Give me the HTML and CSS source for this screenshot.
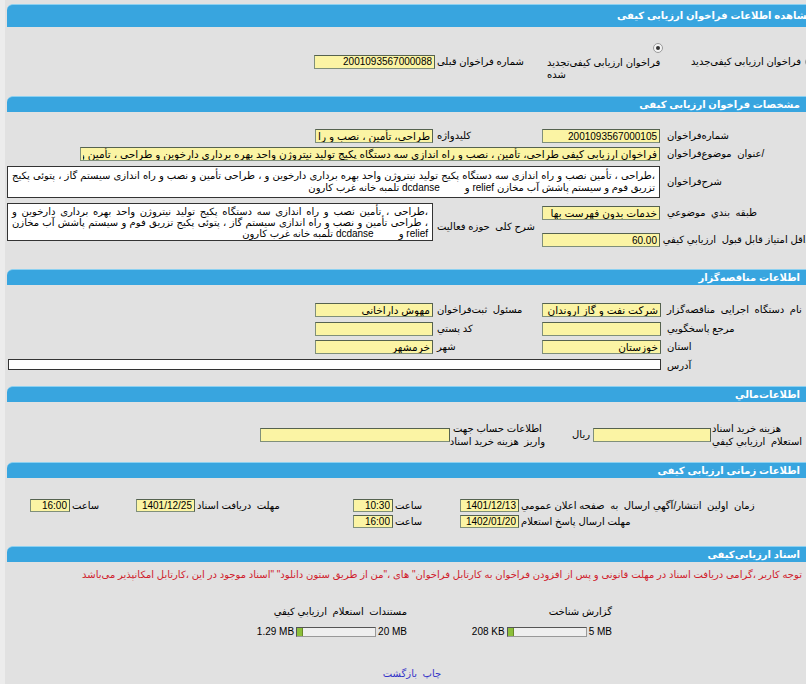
FILE: index.html
```html
<!DOCTYPE html>
<html lang="fa">
<head>
  <meta charset="UTF-8">
  <title>مشاهده اطلاعات فراخوان ارزیابی کیفی</title>
  <link rel="stylesheet" href="styles.css">
</head>
<body>
<div class="page">

  <!-- عنوان صفحه -->
  <div class="bar bar-title">مشاهده اطلاعات فراخوان ارزیابی کیفی</div>
  <div class="sec sec-type">
    <div class="opt opt-new"><span class="radio"></span><span>فراخوان  ارزیابی  کیفی‌جدید</span></div>
    <div class="opt opt-renew"><span class="radio checked"></span><span class="opt-text">فراخوان  ارزیابی  کیفی‌تجدید شده</span></div>
    <div class="lbl">شماره فراخوان قبلی</div>
    <div class="fld"><input class="inp w121" value="2001093567000088" readonly></div>
  </div>

  <!-- مشخصات -->
  <div class="bar">مشخصات فراخوان ارزیابی کیفی</div>
  <div class="sec sec-spec">
    <div class="lbl wide">شماره‌فراخوان</div>
    <div class="fld"><input class="inp w118" value="2001093567000105" readonly></div>
    <div class="lbl">کلیدواژه</div>
    <div class="fld"><input class="inp fa w118 mr2" value="طراحی، تأمین ، نصب و راه اندازی سه دستگاه پکیج" readonly></div>

    <div class="lbl wide">/عنوان&nbsp; موضوع‌فراخوان</div>
    <div class="fld span3"><input class="inp fa w580" value="فراخوان ارزیابی کیفی طراحی، تأمین ، نصب و راه اندازی سه دستگاه پکیج تولید نیتروژن واحد بهره برداری دارخوین و طراحی ، تأمین و نصب و راه اندازی سیستم گاز" readonly></div>

    <div class="lbl wide memo-lbl">شرح‌فراخوان</div>
    <div class="fld span3">
      <div class="memo memo-wide">
        <div class="jl">،طراحی ، تأمین  نصب و راه اندازی سه دستگاه پکیج تولید نیتروژن واحد بهره برداری دارخوین و ، طراحی تأمین و نصب و راه اندازی سیستم گاز ، پتوئی پکیج</div>
        <div>تزریق فوم و سیستم پاشش آب مخازن relief و &nbsp; &nbsp; &nbsp; &nbsp; dcdanse تلمبه خانه غرب کارون</div>
      </div>
    </div>

    <div class="lbl wide">طبقه&nbsp; بندي&nbsp; موضوعي</div>
    <div class="fld"><input class="inp fa w118" value="خدمات بدون فهرست بها" readonly></div>
    <div class="lbl rows2 area-lbl">شرح کلی&nbsp; حوزه فعالیت</div>
    <div class="fld rows2 top">
      <div class="memo memo-small">
        <div class="jl">،طراحی ، تأمین نصب و راه اندازی سه دستگاه پکیج تولید نیتروژن واحد بهره برداری دارخوین و</div>
        <div class="jl">، طراحی تأمین و نصب و راه اندازی سیستم گاز ، پتوئی پکیج تزریق فوم و سیستم پاشش آب مخازن</div>
        <div>relief و &nbsp; &nbsp; &nbsp; &nbsp; dcdanse تلمبه خانه غرب کارون</div>
      </div>
    </div>

    <div class="lbl wide">حداقل امتیاز قابل قبول&nbsp; ارزیابي کیفي</div>
    <div class="fld"><input class="inp w118" value="60.00" readonly></div>
  </div>

  <!-- مناقصه گزار -->
  <div class="bar">اطلاعات مناقصه‌گزار</div>
  <div class="sec sec-org">
    <div class="lbl wide">نام&nbsp; دستگاه&nbsp; اجرایی&nbsp; مناقصه‌گزار</div>
    <div class="fld"><input class="inp fa w119" value="شرکت نفت و گاز اروندان" readonly></div>
    <div class="lbl">مسئول&nbsp; ثبت‌فراخوان</div>
    <div class="fld"><input class="inp fa w118 mr2" value="مهوش داراخانی" readonly></div>

    <div class="lbl wide">مرجع پاسخگويي</div>
    <div class="fld"><input class="inp w119" value="" readonly></div>
    <div class="lbl">کد پستي</div>
    <div class="fld"><input class="inp w118 mr2" value="" readonly></div>

    <div class="lbl wide">استان</div>
    <div class="fld"><input class="inp fa w119" value="خوزستان" readonly></div>
    <div class="lbl">شهر</div>
    <div class="fld"><input class="inp fa w118 mr2" value="خرمشهر" readonly></div>

    <div class="lbl wide">آدرس</div>
    <div class="fld span3"><input class="inp addr" value="" readonly></div>
  </div>

  <!-- مالی -->
  <div class="bar">اطلاعات‌مالي</div>
  <div class="sec sec-money">
    <div class="lbl two">هزینه خرید اسناد<br>استعلام&nbsp; ارزیابي کیفي</div>
    <div class="fld"><input class="inp w118" value="" readonly></div>
    <div class="unit">ریال</div>
    <div class="lbl two">اطلاعات حساب جهت<br>واریز&nbsp; هزینه خرید اسناد</div>
    <div class="fld"><input class="inp w190 mr2" value="" readonly></div>
  </div>

  <!-- زمان -->
  <div class="bar">اطلاعات زمانی ارزیابی کیفی</div>
  <div class="sec sec-time">
    <div class="lbl">زمان&nbsp; اولین&nbsp; انتشار/آگهي ارسال&nbsp; به&nbsp; صفحه اعلان عمومي</div>
    <div class="fld"><input class="inp w59" value="1401/12/13" readonly></div>
    <div class="lbl">ساعت</div>
    <div class="fld"><input class="inp w40" value="10:30" readonly></div>
    <div class="lbl">مهلت&nbsp; دریافت اسناد</div>
    <div class="fld"><input class="inp w59" value="1401/12/25" readonly></div>
    <div class="lbl">ساعت</div>
    <div class="fld"><input class="inp w40" value="16:00" readonly></div>

    <div class="lbl row-start">مهلت ارسال پاسخ استعلام</div>
    <div class="fld"><input class="inp w59" value="1402/01/20" readonly></div>
    <div class="lbl">ساعت</div>
    <div class="fld"><input class="inp w40" value="16:00" readonly></div>
  </div>

  <!-- اسناد -->
  <div class="bar">اسناد ارزیابی‌کیفی</div>
  <div class="sec sec-docs">
    <p class="notice">توجه کاربر ،گرامی دریافت اسناد در مهلت قانونی و پس از افزودن فراخوان به کارتابل فراخوان" های ،"من از طریق ستون دانلود" "اسناد موجود در این ،کارتابل امکانپذیر می‌باشد</p>

    <div class="docs">
      <div class="doc">
        <div class="doc-title">گزارش شناخت</div>
        <div class="size"><span>208 KB</span><span class="meter"><i></i></span><span>5 MB</span></div>
      </div>
      <div class="doc">
        <div class="doc-title">مستندات&nbsp; استعلام&nbsp; ارزیابي کیفي</div>
        <div class="size"><span>1.29 MB</span><span class="meter"><i></i></span><span>20 MB</span></div>
      </div>
    </div>

    <div class="links"><a href="#">چاپ</a>&nbsp; <a href="#">بازگشت</a></div>
  </div>

</div>
</body>
</html>
```

FILE: styles.css
```css
/* صفحه خاکستری با نوار سمت چپ روشن‌تر */
html, body {
  margin: 0;
  padding: 0;
  overflow: hidden;
}

body {
  background: #ececec;
  font-family: "Liberation Sans", "DejaVu Sans", sans-serif;
  font-size: 10px;
  color: #000;
}

.page {
  direction: rtl;
  width: 810px;
  height: 684px;
  margin-left: 5px;
  padding: 4px 0 0 2px;
  background: #e1e1e1;
}

/* نوارهای آبی عنوان */
.bar {
  height: 15px;
  line-height: 15px;
  padding-right: 17px;
  background: #38a5df;
  border-top: 1px solid #8cd0f0;
  border-radius: 6px 0 0 0;
  color: #fff;
  font-weight: bold;
  font-size: 10px;
  white-space: nowrap;
}

.bar-title {
  height: 22px;
  line-height: 22px;
  padding-right: 4px;
}

/* جدول‌ها */
.sec {
  display: grid;
  align-items: center;
}

.lbl {
  text-align: left;
  padding-left: 2px;
  white-space: nowrap;
  line-height: 14px;
}

.lbl.wide {
  padding-left: 7px;
}

.lbl.two {
  line-height: 13px;
}

.fld {
  display: flex;
  justify-content: flex-start;
}

.span3 {
  grid-column: span 3;
}

.rows2 {
  grid-row: span 2;
}

.top {
  margin-top: -3px;
}

/* فیلدهای زرد */
.inp {
  box-sizing: border-box;
  height: 14px;
  margin: 0;
  padding: 0 2px;
  direction: rtl;
  background: #fbf4a4;
  border: 1px solid #7f8f7a;
  border-top-color: #55624f;
  border-right-color: #55624f;
  font-family: "Liberation Sans", "DejaVu Sans", sans-serif;
  font-size: 10px;
  color: #000;
  outline: none;
}

.inp.fa {
  font-size: 10.5px;
}

.w40 { width: 40px; }
.w59 { width: 59px; }
.w118 { width: 118px; }
.w119 { width: 119px; }
.w121 { width: 121px; }
.w190 { width: 190px; }
.w580 { width: 580px; }
.mr2 { margin-right: 2px; }

.addr {
  width: 653px;
  height: 11px;
  background: #fff;
  border: 1px solid #333;
}

/* متن‌های چندخطی سفید */
.memo {
  box-sizing: border-box;
  background: #fff;
  border: 1px solid #333;
  padding: 3px 4px;
  line-height: 12px;
  font-size: 10px;
  white-space: nowrap;
}

.memo .jl {
  text-align: justify;
  text-align-last: justify;
}

.memo-wide {
  width: 653px;
  height: 32px;
}

.memo-small {
  width: 426px;
  height: 38px;
  margin-right: 2px;
  padding: 2px 4px;
  line-height: 11px;
}

/* نوع فراخوان */
.sec-type {
  height: 69px;
  grid-template-columns: 125px 27px 125px 105px 1fr;
}

.opt {
  display: flex;
  align-items: center;
  white-space: nowrap;
}

.opt-new {
  grid-column: 1;
}

.opt-renew {
  grid-column: 3;
  flex-direction: column;
  align-items: flex-start;
  white-space: normal;
}

.opt-text {
  width: 118px;
  text-align: left;
  line-height: 12px;
  margin-top: 4px;
}

.radio {
  box-sizing: border-box;
  flex: none;
  width: 10px;
  height: 10px;
  margin: 0 2px 0 4px;
  border: 1px solid #9a9a9a;
  border-radius: 50%;
  background: #f4f4f4;
  position: relative;
}

.radio.checked::after {
  content: '';
  position: absolute;
  left: 2px;
  top: 2px;
  width: 4px;
  height: 4px;
  border-radius: 50%;
  background: #333;
}

.sec-type .lbl {
  grid-column: 4;
}

/* مشخصات */
.sec-spec {
  grid-template-columns: 157px 118px 107px 1fr;
  grid-template-rows: 18px 19px 40px 27px 14px;
  align-items: start;
  padding: 17px 0 22px;
}

.memo-lbl {
  margin-top: 9px;
}

.area-lbl {
  margin-top: 14px;
}

/* مناقصه گزار */
.sec-org {
  grid-template-columns: 156px 119px 107px 1fr;
  grid-template-rows: 19px 18px 19px 11px;
  align-items: start;
  padding: 18px 0 16px;
}

.sec-org .lbl.wide {
  padding-left: 6px;
}

/* مالی */
.sec-money {
  grid-template-columns: 106px 119px 47px 93px 1fr;
  height: 27px;
  padding: 19px 0 14px;
}

.sec-money .lbl {
  padding-left: 1px;
}

.unit {
  padding-right: 2px;
}

/* زمان */
.sec-time {
  grid-template-columns: 298px 60px 66px 40px 158px 60px 65px 40px 1fr;
  grid-template-rows: 16px 13px;
  align-items: start;
  padding: 21px 0 18px;
}

.sec-time .inp {
  height: 13px;
}

.sec-time .lbl {
  line-height: 13px;
}

.row-start {
  grid-column: 1;
}

/* اسناد */
.sec-docs {
  display: block;
}

.notice {
  margin: 0;
  padding: 6px 15px 0 0;
  line-height: 14px;
  color: #d0202c;
  white-space: nowrap;
}

.docs {
  display: flex;
  justify-content: center;
  margin-top: 23px;
}

.doc {
  box-sizing: border-box;
  width: 205px;
  padding-right: 5px;
}

.doc-title {
  line-height: 14px;
}

.size {
  direction: ltr;
  display: flex;
  justify-content: flex-end;
  align-items: center;
  gap: 2px;
  margin-top: 7px;
}

.meter {
  box-sizing: border-box;
  width: 80px;
  height: 10px;
  border: 1px solid #555;
  border-right-color: #999;
  border-bottom-color: #999;
  background: #efefef;
}

.meter i {
  display: block;
  width: 5px;
  height: 100%;
  background: #8cbf3a;
  border-right: 1px solid #6a8a2a;
}

.links {
  text-align: center;
  margin-top: 31px;
}

.links a {
  color: #3434c8;
  text-decoration: none;
}
```
